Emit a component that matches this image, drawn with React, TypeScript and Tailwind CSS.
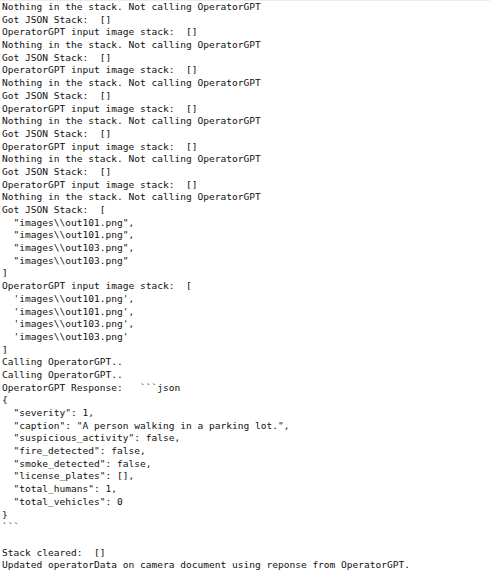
import React from "react";

const lines: string[] = [
  "Nothing in the stack. Not calling OperatorGPT",
  "Got JSON Stack:  []",
  "OperatorGPT input image stack:  []",
  "Nothing in the stack. Not calling OperatorGPT",
  "Got JSON Stack:  []",
  "OperatorGPT input image stack:  []",
  "Nothing in the stack. Not calling OperatorGPT",
  "Got JSON Stack:  []",
  "OperatorGPT input image stack:  []",
  "Nothing in the stack. Not calling OperatorGPT",
  "Got JSON Stack:  []",
  "OperatorGPT input image stack:  []",
  "Nothing in the stack. Not calling OperatorGPT",
  "Got JSON Stack:  []",
  "OperatorGPT input image stack:  []",
  "Nothing in the stack. Not calling OperatorGPT",
  "Got JSON Stack:  [",
  '  "images\\\\out101.png",',
  '  "images\\\\out101.png",',
  '  "images\\\\out103.png",',
  '  "images\\\\out103.png"',
  "]",
  "OperatorGPT input image stack:  [",
  "  'images\\\\out101.png',",
  "  'images\\\\out101.png',",
  "  'images\\\\out103.png',",
  "  'images\\\\out103.png'",
  "]",
  "Calling OperatorGPT..",
  "Calling OperatorGPT..",
  "OperatorGPT Response:   ```json",
  "{",
  '  "severity": 1,',
  '  "caption": "A person walking in a parking lot.",',
  '  "suspicious_activity": false,',
  '  "fire_detected": false,',
  '  "smoke_detected": false,',
  '  "license_plates": [],',
  '  "total_humans": 1,',
  '  "total_vehicles": 0',
  "}",
  "```",
  "",
  "Stack cleared:  []",
  "Updated operatorData on camera document using reponse from OperatorGPT.",
];

export default function App() {
  return (
    <div className="w-[490px] h-[573px] bg-white border-t border-[#ececec] overflow-hidden">
      <pre
        className="m-0 pl-[2px] pt-[0px] text-[9.55px] leading-[12.68px] text-[#111111] whitespace-pre"
        style={{ fontFamily: '"DejaVu Sans Mono", "Liberation Mono", monospace' }}
      >
        {lines.join("\n")}
      </pre>
    </div>
  );
}
